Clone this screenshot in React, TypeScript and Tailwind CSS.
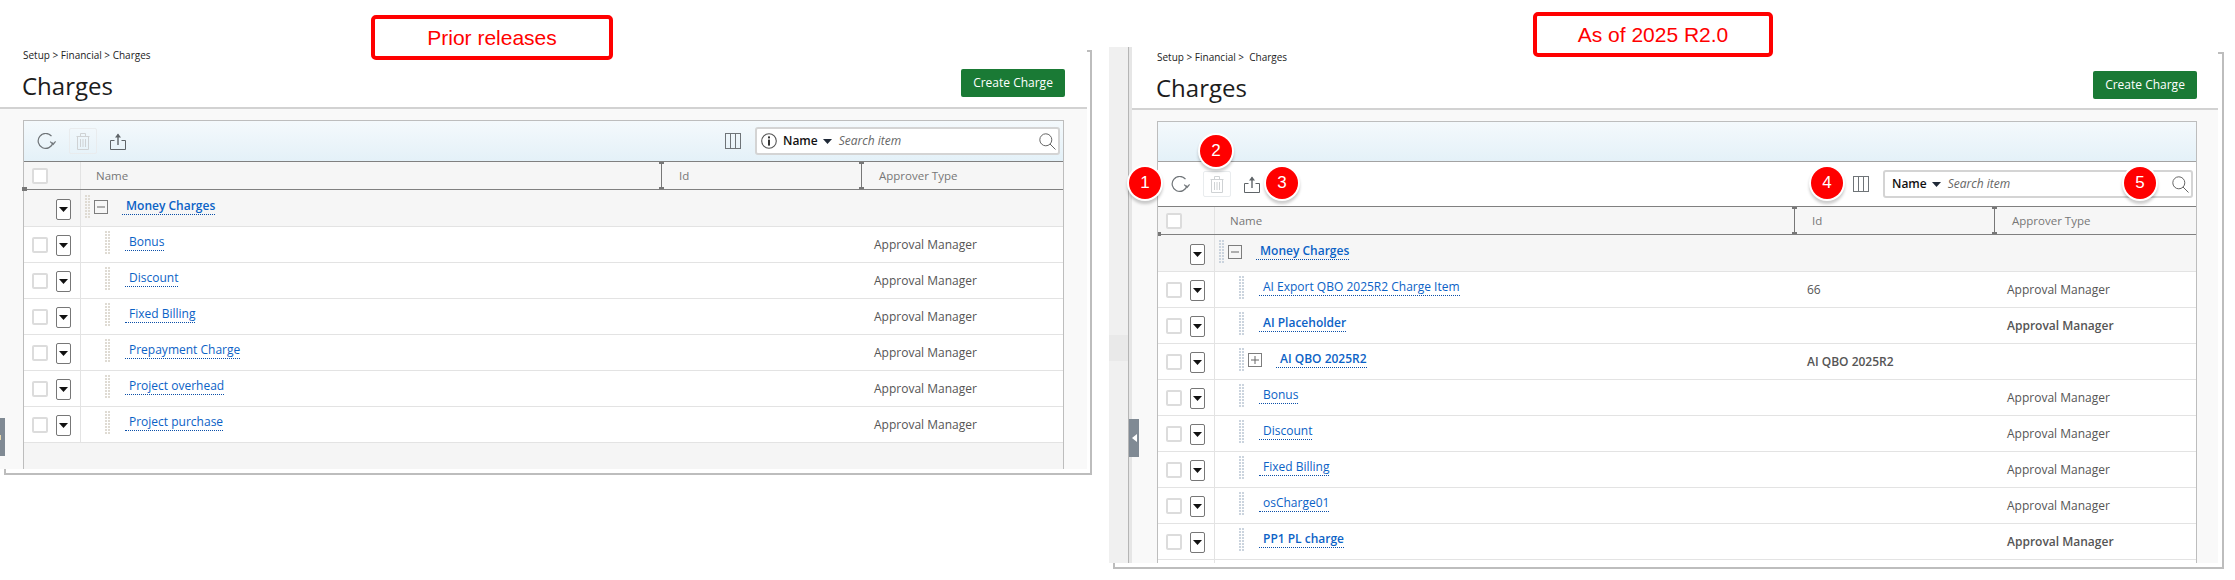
import React from "react";

type ChargeRow = {
  name: string;
  id?: string;
  approver?: string;
  bold?: boolean;
  expandable?: boolean;
};

const oldRows: ChargeRow[] = [
  { name: "Bonus", approver: "Approval Manager" },
  { name: "Discount", approver: "Approval Manager" },
  { name: "Fixed Billing", approver: "Approval Manager" },
  { name: "Prepayment Charge", approver: "Approval Manager" },
  { name: "Project overhead", approver: "Approval Manager" },
  { name: "Project purchase", approver: "Approval Manager" },
];

const newRows: ChargeRow[] = [
  { name: "AI Export QBO 2025R2 Charge Item", id: "66", approver: "Approval Manager" },
  { name: "AI Placeholder", approver: "Approval Manager", bold: true },
  { name: "AI QBO 2025R2", id: "AI QBO 2025R2", bold: true, expandable: true },
  { name: "Bonus", approver: "Approval Manager" },
  { name: "Discount", approver: "Approval Manager" },
  { name: "Fixed Billing", approver: "Approval Manager" },
  { name: "osCharge01", approver: "Approval Manager" },
  { name: "PP1 PL charge", approver: "Approval Manager", bold: true },
];

const Grip = ({ color }: { color: string }) => (
  <svg width="5" height="23" className="shrink-0">
    {Array.from({ length: 8 }).map((_, i) => (
      <g key={i} fill={color}>
        <rect x="0" y={i * 3} width="2" height="2" />
        <rect x="3" y={i * 3} width="2" height="2" />
      </g>
    ))}
  </svg>
);

const TreeBox = ({ open }: { open: boolean }) => (
  <svg width="14" height="14" className="shrink-0 mt-[5px]">
    <rect x="0.5" y="0.5" width="13" height="13" fill="none" stroke="#7d7d7d" />
    <path d="M3 7H11" stroke="#666" />
    {!open && <path d="M7 3V11" stroke="#666" />}
  </svg>
);

const RefreshIcon = () => (
  <svg width="19" height="17" viewBox="0 0 19 17" fill="none" className="shrink-0">
    <path d="M14.5 3.2A7.5 7.5 0 1 0 16 9.5" stroke="#6f7478" strokeWidth="1.2" />
    <path d="M13.2 8.6L16.2 11.4L18.6 8.4" stroke="#6f7478" strokeWidth="1.2" />
  </svg>
);

const TrashIcon = () => (
  <svg width="14" height="17" viewBox="0 0 14 17" fill="none" stroke="#cfd2d4">
    <path d="M0.5 3.5H13.5M4.5 3.5V0.5H9.5V3.5M1.5 3.5V16.5H12.5V3.5M4.5 6V14M7 6V14M9.5 6V14" />
  </svg>
);

const ExportIcon = () => (
  <svg width="16" height="17" viewBox="0 0 16 17" fill="none" className="shrink-0" stroke="#5f6468">
    <path d="M4.5 7.5H0.5V16.5H15.5V7.5H11.5" />
    <path d="M8 12V1.5" strokeWidth="1.4" />
    <path d="M8 0.5L11 4.5H5Z" fill="#5f6468" stroke="none" />
  </svg>
);

const ColumnsIcon = () => (
  <svg width="16" height="16" viewBox="0 0 16 16" fill="none" stroke="#6f7478" className="shrink-0">
    <rect x="0.5" y="0.5" width="15" height="15" />
    <path d="M5.5 0.5V15.5M10.5 0.5V15.5" />
  </svg>
);

const InfoIcon = () => (
  <svg width="16" height="16" viewBox="0 0 16 16" fill="none" className="shrink-0">
    <circle cx="8" cy="8" r="7.3" stroke="#555" strokeWidth="1.1" />
    <rect x="7" y="3.4" width="2" height="2" fill="#333" />
    <rect x="7" y="6.6" width="2" height="6" fill="#333" />
  </svg>
);

const SearchIcon = () => (
  <svg width="17" height="17" viewBox="0 0 17 17" fill="none" stroke="#666" className="shrink-0">
    <circle cx="6.8" cy="6.8" r="6" />
    <path d="M11 11L16.5 16.5" />
  </svg>
);

const Caret = () => (
  <svg width="9" height="5" className="block shrink-0">
    <path d="M0 0H9L4.5 5Z" fill="#1f2937" />
  </svg>
);

const RowMenu = () => (
  <div className="w-[15px] h-[21px] shrink-0 flex items-center justify-center bg-white border border-[#777] rounded-[2px]">
    <svg width="9" height="5">
      <path d="M0 0H9L4.5 5Z" fill="#111" />
    </svg>
  </div>
);

const CheckBox = () => (
  <div className="w-4 h-4 shrink-0 bg-white border-2 border-[#dcdcdc] rounded-[2px]" />
);

const HeaderSep = () => (
  <div className="relative h-full w-px bg-[#777] shrink-0">
    <div className="absolute top-0 left-[-2px] w-[5px] h-[2px] bg-[#777]" />
    <div className="absolute bottom-0 left-[-2px] w-[5px] h-[2px] bg-[#777]" />
  </div>
);

const Toolbar = ({ withInfo, height }: { withInfo: boolean; height: string }) => (
  <div className={`flex items-center pl-[13px] pr-[3px] ${height}`}>
    <RefreshIcon />
    <div className="ml-[13px] w-[28px] h-[26px] flex items-center justify-center border border-[#e9ecee] rounded-[2px]">
      <TrashIcon />
    </div>
    <div className="ml-[13px]">
      <ExportIcon />
    </div>
    <div className="ml-auto">
      <ColumnsIcon />
    </div>
    <div
      className={`ml-[14px] h-[28px] flex items-center bg-white border-2 border-[#d4d4d4] rounded-[3px] pr-[2px] ${
        withInfo ? "w-[305px] pl-[4px]" : "w-[310px] pl-[7px]"
      }`}
    >
      {withInfo && <InfoIcon />}
      <span className={`text-[12px] font-semibold text-[#111] ${withInfo ? "ml-[6px]" : ""}`}>Name</span>
      <span className="ml-[5px]">
        <Caret />
      </span>
      <span className="ml-[7px] text-[12px] italic text-[#666]">Search item</span>
      <span className="ml-auto">
        <SearchIcon />
      </span>
    </div>
  </div>
);

const HeaderRow = () => (
  <div className="grid grid-cols-[57px_1fr_200px_202px] h-[29px] bg-[#f6f6f6] border-y border-[#808080] text-[11.5px] text-[#777]">
    <div className="flex items-center pl-[8px] border-r border-[#e3e3e3]">
      <CheckBox />
    </div>
    <div className="pl-[15px] leading-[27px]">Name</div>
    <div className="flex h-full">
      <HeaderSep />
      <span className="pl-[17px] leading-[27px]">Id</span>
    </div>
    <div className="flex h-full">
      <HeaderSep />
      <span className="pl-[17px] leading-[27px]">Approver Type</span>
    </div>
    <div className="flex h-full">
      <HeaderSep />
    </div>
  </div>
);

const NameLink = ({ text, bold, indent }: { text: string; bold?: boolean; indent: string }) => (
  <span
    className={`${indent} h-[20px] self-start pl-[4px] pt-[2px] leading-[17px] text-[12px] text-[#0b62c6] border-b border-dotted border-[#0b4fa8] whitespace-nowrap ${
      bold ? "font-semibold" : ""
    }`}
  >
    {text}
  </span>
);

const GroupRow = ({ gripColor }: { gripColor: string }) => (
  <div className="grid grid-cols-[57px_1fr_200px_202px] h-[37px] bg-[#f6f6f6] border-b border-[#e3e3e3]">
    <div className="flex items-start pl-[32px] pt-[9px] border-r border-[#e3e3e3]">
      <RowMenu />
    </div>
    <div className="flex pl-[4px] pt-[5px]">
      <Grip color={gripColor} />
      <div className="ml-[4px]">
        <TreeBox open />
      </div>
      <NameLink text="Money Charges" bold indent="ml-[14px]" />
    </div>
  </div>
);

const ItemRow = ({ row, gripColor }: { row: ChargeRow; gripColor: string }) => (
  <div className="grid grid-cols-[57px_1fr_200px_202px] h-[36px] bg-white border-b border-[#e3e3e3]">
    <div className="flex items-start pl-[8px] pt-[8px] gap-[8px] border-r border-[#e3e3e3]">
      <div className="pt-[2px]">
        <CheckBox />
      </div>
      <RowMenu />
    </div>
    <div className="flex pl-[24px] pt-[4px]">
      <Grip color={gripColor} />
      {row.expandable && (
        <div className="ml-[4px]">
          <TreeBox open={false} />
        </div>
      )}
      <NameLink text={row.name} bold={row.bold} indent={row.expandable ? "ml-[14px]" : "ml-[15px]"} />
    </div>
    <div className={`pl-[13px] leading-[36px] text-[12px] text-[#555] whitespace-nowrap ${row.bold ? "font-semibold" : ""}`}>
      {row.id}
    </div>
    <div className={`pl-[13px] leading-[36px] text-[12px] text-[#555] whitespace-nowrap ${row.bold ? "font-semibold" : ""}`}>
      {row.approver}
    </div>
  </div>
);

const PageHead = ({
  crumb,
  heightClass,
  padClass,
  sideClass,
}: {
  crumb: string;
  heightClass: string;
  padClass: string;
  sideClass: string;
}) => (
  <div className={`flex justify-between bg-white border-b-2 border-[#d2d2d2] ${heightClass} ${padClass} ${sideClass}`}>
    <div>
      <div className="text-[10px] leading-[10px] text-[#222] whitespace-pre">{crumb}</div>
      <div className="mt-[10px] -ml-[1px] text-[24px] leading-[32px] text-[#1c1c1c]">Charges</div>
    </div>
    <button className="mt-[19px] w-[104px] h-[28px] bg-[#1a7a35] rounded-[2px] text-[12px] text-white">
      Create Charge
    </button>
  </div>
);

const Bubble = ({ n, className }: { n: number; className: string }) => (
  <div
    className={`absolute w-8 h-8 rounded-full bg-[#f00] flex items-center justify-center text-white text-[17px] font-['Liberation_Sans',sans-serif] shadow-[0_0_0_2px_#fff,0_3px_3px_2px_rgba(0,0,0,0.2)] ${className}`}
  >
    {n}
  </div>
);

const Label = ({ text, className }: { text: string; className: string }) => (
  <div
    className={`absolute h-[45px] bg-white border-4 border-[#f00] rounded-[5px] flex items-center justify-center text-[21px] text-[#f00] font-['Liberation_Sans',sans-serif] ${className}`}
  >
    {text}
  </div>
);

export default function App() {
  return (
    <div className="relative w-[2235px] h-[580px] overflow-hidden bg-white flex font-['Open_Sans',sans-serif]">
      {/* prior releases */}
      <div className="w-[1092px] pt-[50px] shrink-0">
        <div className="flex h-[419px]">
          <div className="w-[1087px] flex flex-col">
            <PageHead
              crumb="Setup > Financial > Charges"
              heightClass="h-[59px]"
              padClass="pt-0"
              sideClass="pl-[23px] pr-[22px]"
            />
            <div className="flex-1 min-h-0 bg-[#f9f9f9] pt-[11px] pl-[23px] pr-[23px]">
              <div className="h-full flex flex-col border-x border-t border-[#bdbdbd] bg-[#f5f5f5]">
                <div className="bg-gradient-to-b from-[#f4f9fc] to-[#e4f1f8]">
                  <Toolbar withInfo height="h-[40px]" />
                </div>
                <HeaderRow />
                <GroupRow gripColor="#dfdbd3" />
                {oldRows.map((r) => (
                  <ItemRow key={r.name} row={r} gripColor="#dfdbd3" />
                ))}
              </div>
            </div>
          </div>
          <div className="w-[5px] border-t-2 border-r-2 border-[#bdbdbd]" />
        </div>
        <div className="ml-[4px] h-[6px] border-x-2 border-b-2 border-[#bdbdbd]" />
      </div>

      {/* as of 2025 R2.0 */}
      <div className="ml-[17px] w-[1115px] pt-[47px] shrink-0">
        <div className="flex h-[516px]">
          <div className="w-[19px] bg-[#f0f0f0] pt-[288px]">
            <div className="h-[26px] bg-[#e9e9e9]" />
          </div>
          <div className="w-[4px] bg-[#e6e6e6] border-l border-[#b5b5b5]" />
          <div className="w-[1086px] flex flex-col">
            <PageHead
              crumb="Setup > Financial >  Charges"
              heightClass="h-[63px]"
              padClass="pt-[5px]"
              sideClass="pl-[25px] pr-[21px]"
            />
            <div className="flex-1 min-h-0 bg-[#f9f9f9] pt-[11px] pl-[25px] pr-[21px]">
              <div className="h-full overflow-hidden flex flex-col border-x border-t border-[#bdbdbd] bg-white">
                <div className="h-[40px] shrink-0 bg-gradient-to-b from-[#f4f9fc] to-[#e4f1f8] border-b border-[#a3a3a3]" />
                <Toolbar withInfo={false} height="h-[44px] shrink-0" />
                <HeaderRow />
                <GroupRow gripColor="#cbd4de" />
                {newRows.map((r) => (
                  <ItemRow key={r.name} row={r} gripColor="#cbd4de" />
                ))}
                <div className="w-[57px] flex-1 border-r border-[#e3e3e3]" />
              </div>
            </div>
          </div>
          <div className="mt-[5px] w-[6px] border-t-2 border-r-2 border-[#bdbdbd]" />
        </div>
        <div className="ml-[4px] h-[6px] border-x-2 border-b-2 border-[#bdbdbd]" />
      </div>

      {/* annotations and handles lying over the panels */}
      <Label text="Prior releases" className="left-[371px] top-[15px] w-[242px]" />
      <Label text="As of 2025 R2.0" className="left-[1533px] top-[12px] w-[240px]" />
      <Bubble n={1} className="left-[1129px] top-[167px]" />
      <Bubble n={2} className="left-[1200px] top-[135px]" />
      <Bubble n={3} className="left-[1266px] top-[167px]" />
      <Bubble n={4} className="left-[1811px] top-[167px]" />
      <Bubble n={5} className="left-[2124px] top-[167px]" />
      <div className="absolute left-0 top-[418px] w-[5px] h-[38px] bg-[#808a94] flex items-center">
        <div className="w-px h-[5px] bg-[#e8d9b0]" />
      </div>
      <div className="absolute left-[1129px] top-[419px] w-[10px] h-[38px] bg-[#808a94] flex items-center justify-center">
        <svg width="5" height="8">
          <path d="M5 0V8L0 4Z" fill="#fff" />
        </svg>
      </div>
    </div>
  );
}
